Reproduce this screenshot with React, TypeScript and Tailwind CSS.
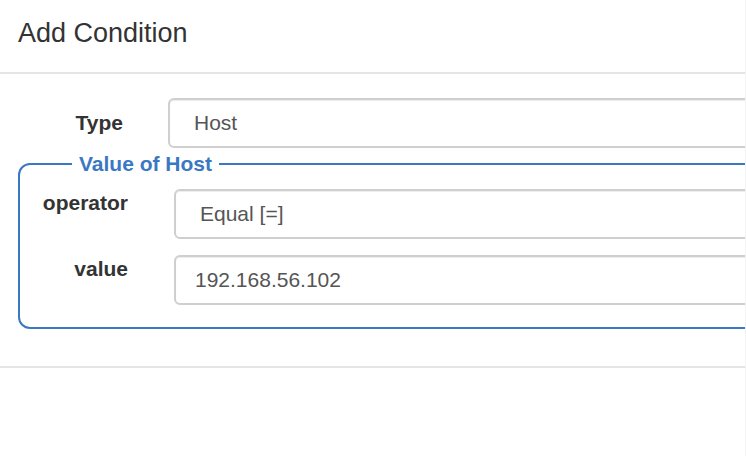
// Add Condition modal: type select plus a "Value of Host" fieldset
const App = () => {
  return (
    <div className="relative w-[746px] h-[456px] overflow-hidden bg-white border-r border-[#f3f3f3] font-['Liberation_Sans',Arial,sans-serif] text-[#333]">
      {/* Header */}
      <div className="h-[74px] pt-[18px] pl-[18px] border-b-2 border-[#e5e5e5]">
        <h4 className="text-[27px] leading-[30px] whitespace-nowrap">Add Condition</h4>
      </div>

      {/* Body */}
      <div className="h-[294px] pt-[24px] border-b-2 border-[#e5e5e5]">
        {/* Type row */}
        <div className="flex items-center h-[50px]">
          <label className="w-[123px] shrink-0 text-right text-[21px] leading-[24px] font-bold">Type</label>
          <div className="ml-[45px] w-[700px] shrink-0 h-[50px] flex items-center pl-[24px] border-2 border-[#cfcfcf] rounded-[6px] shadow-[inset_0_1px_1px_rgba(0,0,0,0.075)] text-[21px] leading-[24px] text-[#555]">
            Host
          </div>
        </div>

        {/* Value of Host */}
        <fieldset className="mt-[4px] ml-[18px] w-[800px] pt-[13px] pb-[22px] border-2 border-[#3b78c3] rounded-[12px]">
          <legend className="ml-[52px] px-[7px] text-[21px] leading-[24px] font-bold text-[#3b78c3]">
            Value of Host
          </legend>

          <div className="flex items-start">
            <label className="w-[108px] shrink-0 pt-[2px] text-right text-[21px] leading-[24px] font-bold">operator</label>
            <div className="ml-[46px] w-[700px] shrink-0 h-[50px] flex items-center pl-[24px] border-2 border-[#cfcfcf] rounded-[6px] shadow-[inset_0_1px_1px_rgba(0,0,0,0.075)] text-[21px] leading-[24px] text-[#555]">
              Equal [=]
            </div>
          </div>

          <div className="flex items-start mt-[16px]">
            <label className="w-[108px] shrink-0 pt-[2px] text-right text-[21px] leading-[24px] font-bold">value</label>
            <div className="ml-[46px] w-[700px] shrink-0 h-[50px] flex items-center pl-[19px] border-2 border-[#cfcfcf] rounded-[6px] shadow-[inset_0_1px_1px_rgba(0,0,0,0.075)] text-[21px] leading-[24px] text-[#555]">
              192.168.56.102
            </div>
          </div>
        </fieldset>
      </div>
    </div>
  );
};

export default App;
